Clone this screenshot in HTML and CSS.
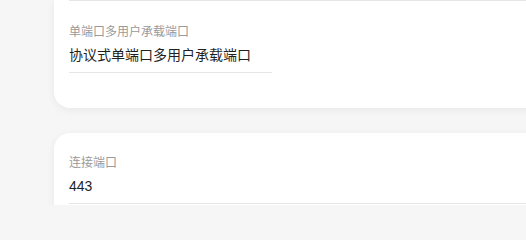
FILE: index.html
```html
<!DOCTYPE html>
<html lang="zh-CN">
<head>
<meta charset="utf-8">
<link rel="stylesheet" href="styles.css">
</head>
<body>
<div class="page">
  <div class="card first">
    <div class="rule"></div>
    <div class="field narrow">
      <div class="label">单端口多用户承载端口</div>
      <div class="value">协议式单端口多用户承载端口</div>
    </div>
  </div>
  <div class="card">
    <div class="field">
      <div class="label">连接端口</div>
      <div class="value">443</div>
    </div>
  </div>
</div>
</body>
</html>
```
FILE: styles.css
```css
html, body {
  margin: 0;
  padding: 0;
  background: #f6f6f6;
  font-family: "Liberation Sans", "Noto Sans CJK SC", sans-serif;
}
.page {
  height: 205px;
  overflow: hidden;
  padding-left: 54px;
  display: flex;
  flex-direction: column;
  gap: 25px;
}
.card {
  flex: none;
  background: #fff;
  border-radius: 16px;
  margin-right: -30px;
  padding: 22px 14px 35px 15px;
  box-shadow: 0 2px 8px rgba(0, 0, 0, 0.06);
  display: flex;
  flex-direction: column;
  gap: 23px;
}
.card.first {
  padding-top: 0;
  border-top-left-radius: 0;
  border-top-right-radius: 0;
}
.rule {
  border-bottom: 1px solid #e6e6e6;
}
.field {
  display: flex;
  flex-direction: column;
  gap: 5px;
  padding-bottom: 7px;
  border-bottom: 1px solid #e6e6e6;
}
.field.narrow {
  width: 203px;
}
.label {
  font-size: 12px;
  line-height: 16px;
  color: #9a9a9a;
}
.value {
  font-size: 14px;
  line-height: 20px;
  color: #1f1f1f;
}
```
